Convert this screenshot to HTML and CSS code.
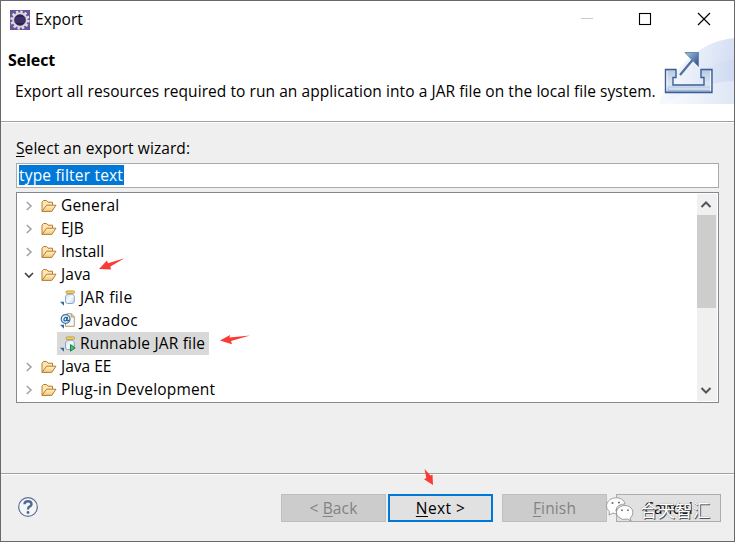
FILE: index.html
```html
<!DOCTYPE html>
<html lang="en">
<head>
<meta charset="utf-8">
<title>Export</title>
<link rel="stylesheet" href="styles.css">
</head>
<body>
<svg class="defs" width="0" height="0">
  <defs>
    <linearGradient id="gold" x1="0" y1="0" x2="0" y2="1"><stop offset="0" stop-color="#fff3cb"/><stop offset="1" stop-color="#f1c777"/></linearGradient>
    <linearGradient id="glass" x1="0" y1="0" x2="1" y2="1"><stop offset="0" stop-color="#c9daee"/><stop offset=".5" stop-color="#f6faff"/><stop offset="1" stop-color="#bfd3ea"/></linearGradient>
    <symbol id="folder" viewBox="0 0 16 14">
      <path d="M1 12.3V3.2L2.5 1.5h3L7 3.2h4.5V6" fill="#ffe6b0" stroke="#b77a30"/>
      <path d="M1 12.4 5.6 6.2H15L10.8 12.4Z" fill="url(#gold)" stroke="#b77a30" stroke-linejoin="round"/>
    </symbol>
    <symbol id="jar" viewBox="0 0 16 16">
      <path d="M7.3 4.2 5.5 6.3v4.7q0 2.5 2.2 2.5h4.4q2.2 0 2.2-2.5V6.3L12.7 4.2Z" fill="url(#glass)" stroke="#8ba6c6"/>
      <rect x="6" y="1" width="8.5" height="2.4" rx="1" fill="#f2d77c" stroke="#c39a35"/>
      <path d="M0 11.7h4v4Z" fill="#316b9d"/>
    </symbol>
    <symbol id="doc" viewBox="0 0 16 16">
      <path d="M6.5.7h5L14.3 3.8v9.5H5.5v-4" fill="#f5f9ff" stroke="#b29a64"/>
      <path d="M11.3.8v3.1h3" fill="#ead8a0" stroke="#b29a64"/>
      <path d="M0 11.7h4v4Z" fill="#316b9d"/>
      <circle cx="5.6" cy="6" r="4.4" fill="#eaf3fc" stroke="#3874a7" stroke-width="1.2"/>
      <path d="M7.5 3.8 7 7.4q1.1 1.2 2.1-.5M7 5.3q-1.4-1.9-2.8.2-.8 2.2.7 2.5 1.5 0 2.1-2" fill="none" stroke="#235f94" stroke-width="1.2"/>
    </symbol>
    <symbol id="closed" viewBox="0 0 10 10"><path d="M2.8 1 7 5 2.8 9" fill="none" stroke="#a0a0a0" stroke-width="1.5"/></symbol>
    <symbol id="opened" viewBox="0 0 10 10"><path d="M1 3 5 7 9 3" fill="none" stroke="#404040" stroke-width="1.6"/></symbol>
  </defs>
</svg>
<div class="window">
  <header class="titlebar">
    <svg class="app-icon" viewBox="0 0 20 20">
      <rect width="20" height="20" fill="#65549a"/>
      <circle cx="10" cy="10" r="8.4" fill="none" stroke="#e5e1e5" stroke-width="2.4" stroke-dasharray="2.4 2"/>
      <circle cx="10" cy="10" r="6.8" fill="#2c2256" stroke="#d9d5da" stroke-width="2"/>
      <path d="M4.5 8h11M4 10h12M4.5 12h11" stroke="#574981" stroke-width=".8"/>
    </svg>
    <span class="caption">Export</span>
    <svg class="controls" viewBox="0 0 140 37">
      <path d="M6 17.5h12" stroke="#c9c9c9"/>
      <rect x="64.5" y="12.5" width="11" height="11" fill="none" stroke="#000" stroke-width="1.1"/>
      <path d="m123 12 12 12m0-12-12 12" stroke="#000" stroke-width="1.15"/>
    </svg>
  </header>
  <section class="banner">
    <div class="banner-text">
      <h1>Select</h1>
      <p>Export all resources required to run an application into a JAR file on the local file system.</p>
    </div>
    <svg class="banner-art" viewBox="0 0 75 66">
      <defs>
        <linearGradient id="sky" x1="0" y1="0" x2="1" y2=".2"><stop offset="0" stop-color="#fff"/><stop offset="1" stop-color="#d5dff4"/></linearGradient>
        <linearGradient id="sky2" x1="0" y1="0" x2="1" y2="0"><stop offset="0" stop-color="#f1f5fd"/><stop offset="1" stop-color="#cbd8f1"/></linearGradient>
        <linearGradient id="tray" x1="0" y1="0" x2="0" y2="1"><stop offset="0" stop-color="#b9c8e0"/><stop offset=".65" stop-color="#dce7f5"/><stop offset="1" stop-color="#91a9ce"/></linearGradient>
        <linearGradient id="head" x1="0" y1="0" x2="1" y2="1"><stop offset="0" stop-color="#a9c5e4"/><stop offset="1" stop-color="#244a86"/></linearGradient>
      </defs>
      <path d="M0 66Q4 50 18 33 42 3 75 0V66Z" fill="url(#sky)"/>
      <path d="M19 66Q34 27 75 21V66Z" fill="url(#sky2)" opacity=".65"/>
      <path d="M4 66Q42 44 75 43V66Z" fill="#fff" opacity=".35"/>
      <path d="M6.5 31.5h10.5v8h-3v7.5h31v-7.5h-3v-8h11v23h-46.5Z" fill="url(#tray)" stroke="#3c5e96" stroke-width="1.4"/>
      <path d="M8 33v20M51.500 33v20M10 51h41" stroke="#eef4fc" fill="none"/>
      <path d="m21 37 15-18" stroke="#4e6f9f" stroke-width="2.2"/>
      <path d="M26 14.500h13.500v14Z" fill="url(#head)" stroke="#6788b3"/>
    </svg>
  </section>
  <main class="content">
    <label class="field-label"><u>S</u>elect an export wizard:</label>
    <div class="filter"><span>type filter text</span></div>
    <div class="tree">
      <div class="rows">
        <div class="row"><svg class="twist"><use href="#closed"/></svg><svg class="folder"><use href="#folder"/></svg><span>General</span></div>
        <div class="row"><svg class="twist"><use href="#closed"/></svg><svg class="folder"><use href="#folder"/></svg><span class="tight">EJB</span></div>
        <div class="row"><svg class="twist"><use href="#closed"/></svg><svg class="folder"><use href="#folder"/></svg><span class="tight">Install</span></div>
        <div class="row"><svg class="twist"><use href="#opened"/></svg><svg class="folder"><use href="#folder"/></svg><span>Java</span></div>
        <div class="row child"><svg class="leaf"><use href="#jar"/></svg><span class="wide">JAR file</span></div>
        <div class="row child"><svg class="leaf"><use href="#doc"/></svg><span class="wide">Javadoc</span></div>
        <div class="row child selected"><svg class="leaf" viewBox="0 0 16 16"><use href="#jar" width="16" height="16"/><path d="M10.5 8.6v6.6l4.7-3.3Z" fill="#4fbd70" stroke="#16893f"/></svg><span>Runnable JAR file</span></div>
        <div class="row"><svg class="twist"><use href="#closed"/></svg><svg class="folder"><use href="#folder"/></svg><span class="tight">Java EE</span></div>
        <div class="row"><svg class="twist"><use href="#closed"/></svg><svg class="folder"><use href="#folder"/></svg><span>Plug-in Development</span></div>
      </div>
      <div class="scrollbar">
        <svg class="arrow" viewBox="0 0 20 21"><path d="m5.500 13 4.500-4.500 4.500 4.500" fill="none" stroke="#555" stroke-width="2"/></svg>
        <div class="thumb"></div>
        <svg class="arrow bottom" viewBox="0 0 20 21"><path d="m5.500 8 4.500 4.500L14.500 8" fill="none" stroke="#555" stroke-width="2"/></svg>
      </div>
    </div>
  </main>
  <footer class="footer">
    <svg class="help" viewBox="0 0 20 20"><circle cx="10" cy="10" r="9.3" fill="#f4f5f7" stroke="#5b7093" stroke-width="1.2"/><path d="M6.500 7.200Q6.600 4.300 10 4.300t3.500 2.800Q13.500 9 11.400 9.700 10 10.300 10 12.500" fill="none" stroke="#526890" stroke-width="2.400"/><circle cx="10" cy="15.500" r="1.400" fill="#526890"/></svg>
    <div class="buttons">
      <button class="disabled">&lt; <u>B</u>ack</button>
      <button class="primary"><u>N</u>ext &gt;</button>
      <button class="disabled finish"><u>F</u>inish</button>
      <button class="cancel">Cancel</button>
    </div>
  </footer>
</div>
<svg class="mark mark-java" viewBox="0 0 26 14"><path d="M0 11 8 2.500 9 5.200 25.500.3 11.400 8.500 12 11.500Z" fill="#fb3a36"/></svg>
<svg class="mark mark-run" viewBox="0 0 30 10"><path d="M0 5.500 10 0 9.500 2.500 30 .5 11 6 12 9.300Z" fill="#fb3a36"/></svg>
<svg class="mark mark-next" viewBox="0 0 10 17"><path d="M.5 0 6.500 6.500 8.500 5.500 9 16 0 10.200 2.300 9Z" fill="#fb3a36"/></svg>
<div class="watermark">
  <svg viewBox="0 0 28 25"><g stroke="#888" stroke-width=".8" fill="#fff"><path d="M3.500 14.500Q0 12 .5 8.500C1.500-1 17-2 19 7q-8 0-9 6 0 2 1 4-2 0-4-1l-4 2Z"/><path d="M24 21.200C30 16 26 8.500 19 8.500S8 15 12 19.700q4 4 9.500 2.400l3.600 1.800Z"/></g><g fill="#666"><circle cx="6.500" cy="6" r="1"/><circle cx="13" cy="5.500" r="1"/><circle cx="16" cy="13.200" r=".9"/><circle cx="22" cy="13.200" r=".9"/></g></svg>
  <span>合天智汇</span>
</div>
</body>
</html>
```
FILE: styles.css
```css
* { box-sizing: border-box; }
body { margin: 0; font: 15.5px/23px "Open Sans", "Noto Sans", sans-serif; color: #000; }
.defs { position: absolute; }
.window { width: 735px; height: 542px; display: flex; flex-direction: column; background: #efefef; border: 1px solid #69696b; overflow: hidden; }
svg { display: block; flex: none; }
u { text-decoration-thickness: 1px; text-underline-offset: 2px; }
.titlebar { height: 37px; flex: none; background: #fff; display: flex; align-items: center; padding-left: 9px; }
.app-icon { width: 20px; height: 20px; margin-right: 5px; }
.caption { font-size: 15.5px; letter-spacing: .1px; }
.controls { width: 140px; height: 37px; margin-left: auto; margin-right: 19px; }
.banner { height: 83px; flex: none; background: #fff; display: flex; }
.banner-text { width: 658px; padding: 10px 0 0 7px; }
h1 { margin: 0; font-size: 16px; line-height: 24px; font-weight: 700; letter-spacing: -.1px; }
p { margin: 8px 0 0 7px; line-height: 23px; white-space: nowrap; letter-spacing: .065px; }
.banner-art { width: 75px; height: 66px; }
.content { height: 352px; flex: none; padding: 15px 15px 0; border-top: 1px solid #a0a0a0; box-shadow: inset 0 1px #fff; display: flex; flex-direction: column; }
.field-label { height: 26px; line-height: 23px; letter-spacing: .08px; }
.filter { height: 25px; flex: none; border: 1px solid #a9abb2; background: #fff; padding: 1px 2px; display: flex; }
.filter span { background: #0078d7; color: #fff; height: 20px; line-height: 20px; width: 105px; white-space: nowrap; letter-spacing: .19px; }
.tree { height: 211px; flex: none; margin-top: 4px; border: 1px solid #828790; background: #fff; display: flex; padding: 1px 0 1px 1px; }
.rows { flex: 1; letter-spacing: .18px; }
.tight { letter-spacing: 0; }
.wide { letter-spacing: .4px; }
.row { height: 23px; width: max-content; display: flex; align-items: center; padding-left: 6px; white-space: nowrap; }
.twist { width: 10px; height: 10px; margin-right: 7px; }
.folder { width: 16px; height: 14px; margin-right: 4px; }
.child { margin-left: 39px; padding-left: 3px; padding-right: 4px; }
.leaf { width: 16px; height: 16px; margin-right: 4px; }
.selected { background: #d9d9d9; }
.scrollbar { width: 20px; background: #f0f0f0; display: flex; flex-direction: column; margin-right: 1px; }
.arrow { width: 20px; height: 21px; margin-left: -1px; }
.thumb { width: 19px; height: 93px; background: #cdcdcd; }
.bottom { margin-top: auto; }
.footer { height: 68px; flex: none; border-top: 1px solid #a0a0a0; box-shadow: inset 0 1px #fff; display: flex; padding: 20px 13px 0 17px; justify-content: space-between; }
.help { width: 20px; height: 20px; margin-top: 3px; }
.buttons { display: flex; gap: 2px; }
button { width: 105px; height: 28px; font: inherit; padding: 0; border: 1px solid #adadad; background: #e1e1e1; line-height: 25px; color: #000; white-space: nowrap; letter-spacing: .15px; }
.disabled { background: #ccc; border-color: #bfbfbf; color: #838383; }
.primary { border: 2px solid #0078d7; letter-spacing: .4px; }
.finish { margin-left: 7px; }
.cancel { margin-left: 7px; }
.mark { position: absolute; }
.mark-java { left: 99px; top: 258px; width: 26px; height: 14px; }
.mark-run { left: 220px; top: 335px; width: 30px; height: 10px; }
.mark-next { left: 424px; top: 469px; width: 10px; height: 17px; }
.watermark { position: absolute; left: 606px; top: 497px; display: flex; }
.watermark svg { width: 28px; height: 25px; }
.watermark span { font: 17.5px/25px "Noto Sans CJK SC", sans-serif; color: #fff; margin-left: 6px; white-space: nowrap; text-shadow: 1px 1px 0 #555, 0 0 1px #777; }
```
